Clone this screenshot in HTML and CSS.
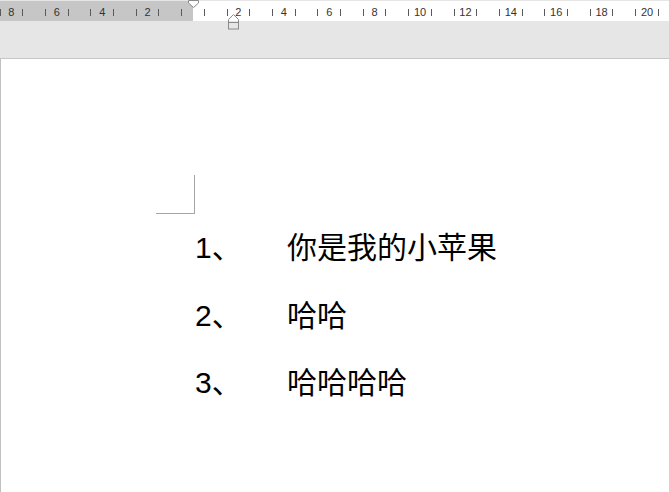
FILE: index.html
```html
<!DOCTYPE html>
<html lang="zh">
<head>
<meta charset="utf-8">
<title>Document</title>
<link rel="stylesheet" href="styles.css">
</head>
<body>
<div class="app">
  <header class="toolbar">
    <svg class="ruler" width="669" height="30" viewBox="0 0 669 30" xmlns="http://www.w3.org/2000/svg">
      <rect x="0" y="1" width="669" height="20" fill="#ffffff"/>
      <rect x="0" y="1" width="193" height="20" fill="#c6c6c6"/>
      <path d="M0.5 9v7M22.5 9v7M45.5 9v7M68.5 9v7M90.5 9v7M113.5 9v7M136.5 9v7M158.5 9v7M181.5 9v7M204.5 9v7M227.5 9v7M249.5 9v7M272.5 9v7M295.5 9v7M317.5 9v7M340.5 9v7M363.5 9v7M385.5 9v7M408.5 9v7M431.5 9v7M454.5 9v7M476.5 9v7M499.5 9v7M522.5 9v7M544.5 9v7M567.5 9v7M590.5 9v7M612.5 9v7M635.5 9v7M658.5 9v7" stroke="#5a5a5a" stroke-width="1" fill="none"/>
      <g class="ruler-num" text-anchor="middle">
        <text x="11.4" y="16">8</text>
        <text x="56.8" y="16">6</text>
        <text x="102.2" y="16">4</text>
        <text x="147.6" y="16">2</text>
        <text x="238.4" y="16">2</text>
        <text x="283.8" y="16">4</text>
        <text x="329.2" y="16">6</text>
        <text x="374.6" y="16">8</text>
        <text x="420" y="16">10</text>
        <text x="465.4" y="16">12</text>
        <text x="510.8" y="16">14</text>
        <text x="556.2" y="16">16</text>
        <text x="601.6" y="16">18</text>
        <text x="647" y="16">20</text>
      </g>
      <polygon points="188.5,0.5 198.5,0.5 198.5,3 193.5,7.5 188.5,3" fill="#ffffff" stroke="#8a8a8a" stroke-width="1"/>
      <polygon points="233.5,14.5 238.5,19.5 238.5,22.5 228.5,22.5 228.5,19.5" fill="none" stroke="#8a8a8a" stroke-width="1"/>
      <rect x="228.5" y="22.5" width="10" height="6.5" fill="none" stroke="#8a8a8a" stroke-width="1"/>
    </svg>
  </header>
  <main class="page">
    <div class="corner"></div>
    <ol class="list">
      <li class="row"><span class="num">1、</span><span class="txt">你是我的小苹果</span></li>
      <li class="row"><span class="num">2、</span><span class="txt">哈哈</span></li>
      <li class="row"><span class="num">3、</span><span class="txt">哈哈哈哈</span></li>
    </ol>
  </main>
</div>
</body>
</html>
```
FILE: styles.css
```css
html, body {
  margin: 0;
  padding: 0;
  width: 669px;
  height: 492px;
  overflow: hidden;
  background: #ffffff;
}

.app {
  display: flex;
  flex-direction: column;
  height: 492px;
}

.toolbar {
  height: 58px;
  background: #e6e6e6;
  flex: none;
}

.ruler {
  display: block;
}

.ruler-num {
  font-family: "Liberation Sans", Arial, sans-serif;
  font-size: 11px;
  fill: #333333;
}

.page {
  flex: 1;
  background: #ffffff;
  border-top: 1px solid #c6c6c6;
  border-left: 1px solid #c0c0c0;
}

.corner {
  margin-top: 116px;
  margin-left: 155px;
  width: 38px;
  height: 38px;
  border-right: 1px solid #a6a6a6;
  border-bottom: 1px solid #a6a6a6;
}

.list {
  list-style: none;
  margin: 0 0 0 194px;
  padding: 0;
  font-family: "Liberation Sans", "Noto Sans CJK SC", sans-serif;
  font-size: 30px;
  line-height: 67.5px;
  color: #000000;
}

.row {
  display: flex;
}

.num {
  width: 92px;
  flex: none;
}
```
